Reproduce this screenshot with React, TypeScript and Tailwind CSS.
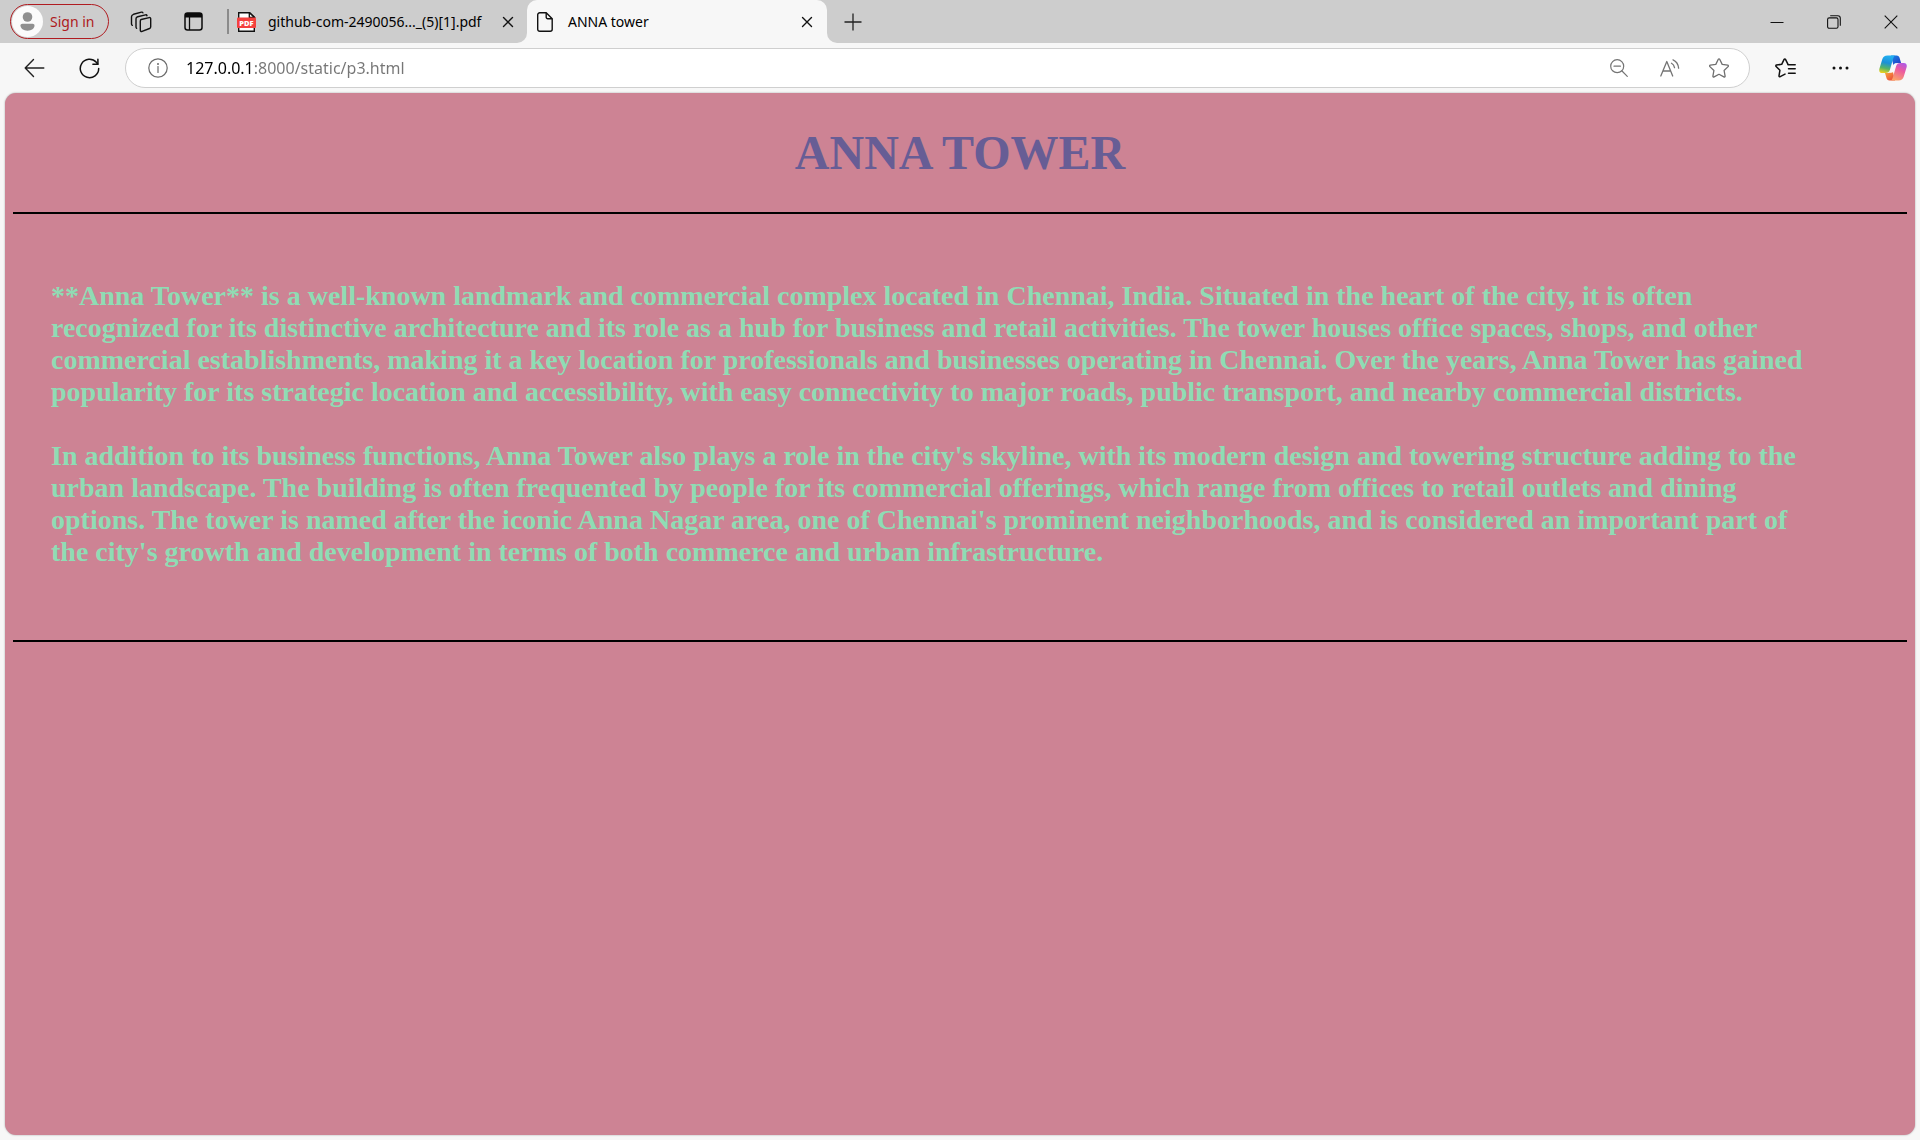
import type { ReactNode } from "react";

type IconButtonProps = { label: string; className: string; children: ReactNode };

function IconButton({ label, className, children }: IconButtonProps) {
  return (
    <button type="button" aria-label={label} className={`flex shrink-0 items-center justify-center ${className}`}>
      {children}
    </button>
  );
}

function AvatarIcon() {
  return (
    <svg width="31" height="31" viewBox="0 0 31 31" aria-hidden="true">
      <circle cx="15.5" cy="15.5" r="15.5" fill="#fbfbfb" />
      <circle cx="15.5" cy="11" r="4.8" fill="#8f8f8f" />
      <path d="M8.5 19.5c0-1 .8-1.8 1.800-1.800h10.400c1 0 1.800.8 1.800 1.800 0 3-3 5.200-7 5.200s-7-2.200-7-5.200z" fill="#8f8f8f" />
    </svg>
  );
}

function WorkspacesIcon() {
  return (
    <svg width="22" height="22" viewBox="0 0 22 22" fill="none" stroke="#111" strokeWidth="1.4" strokeLinejoin="round" strokeLinecap="round" aria-hidden="true">
      <path d="M11.200 8.500l8-1.900c.9-.2 1.500.3 1.500 1.100v8.100c0 .8-.5 1.400-1.200 1.700l-7.400 2.900c-1 .4-1.800-.1-1.800-1.100v-9.100c0-.9.300-1.500.9-1.700z" />
      <path d="M17 4.700c-.2-.7-.7-1-1.500-.8L7.700 5.700C6.600 6 6 6.600 6 7.700v8.300c0 .6.200 1 .6 1.300" />
      <path d="M12.900 1.900c-.2-.6-.7-.9-1.400-.7L3.500 3.300C2.200 3.700 1.500 4.500 1.500 5.700v7.300c0 .6.300 1 .8 1.300" />
    </svg>
  );
}

function TabActionsIcon() {
  return (
    <svg width="19" height="19" viewBox="0 0 19 19" fill="none" aria-hidden="true">
      <rect x="1" y="1" width="17" height="17" rx="2.500" stroke="#0b0b0b" strokeWidth="1.500" />
      <path d="M1 5.500V3.500A2.500 2.500 0 0 1 3.500 1h12A2.500 2.500 0 0 1 18 3.500v2z" fill="#0b0b0b" />
      <path d="M5.500 5v13" stroke="#0b0b0b" strokeWidth="1.300" />
    </svg>
  );
}

function PdfIcon() {
  return (
    <svg width="19" height="20" viewBox="0 0 19 20" aria-hidden="true">
      <path d="M1.700.7h11l4.600 4.400v14.200H1.700z" fill="#fff" stroke="#111" strokeWidth="1.400" />
      <path d="M12.300.7v4.700h5z" fill="#fff" stroke="#111" strokeWidth="1.300" />
      <rect x="0" y="5.500" width="19" height="10.500" rx="1" fill="#f4413f" />
      <text x="9.500" y="13.500" textAnchor="middle" fontFamily="Open Sans, sans-serif" fontWeight="800" fontSize="7.500" fill="#fff">PDF</text>
    </svg>
  );
}

function DocumentIcon() {
  return (
    <svg width="16" height="20" viewBox="0 0 16 20" fill="none" stroke="#111" strokeWidth="1.400" strokeLinejoin="round" aria-hidden="true">
      <path d="M2.700.8h6.500l6 6V17.300a2 2 0 0 1-2 2H2.700a2 2 0 0 1-2-2V2.800a2 2 0 0 1 2-2z" />
      <path d="M9.200.8v4.500a1.500 1.500 0 0 0 1.500 1.500h4.500" />
    </svg>
  );
}

function CrossIcon() {
  return (
    <svg width="12" height="12" viewBox="0 0 12 12" stroke="#111" strokeWidth="1.400" strokeLinecap="round" aria-hidden="true">
      <path d="M1.500 1.500l9 9M10.500 1.500l-9 9" />
    </svg>
  );
}

function PlusIcon() {
  return (
    <svg width="18" height="18" viewBox="0 0 18 18" stroke="#222" strokeWidth="1.300" aria-hidden="true">
      <path d="M9 .5v17M.5 9h17" />
    </svg>
  );
}

function MinimizeIcon() {
  return (
    <svg width="14" height="14" viewBox="0 0 14 14" stroke="#111" aria-hidden="true">
      <path d="M.5 7.500h13" />
    </svg>
  );
}

function RestoreIcon() {
  return (
    <svg width="14" height="14" viewBox="0 0 14 14" fill="none" stroke="#111" strokeWidth="1.100" aria-hidden="true">
      <rect x=".6" y="2.900" width="10.400" height="10.400" rx="1.600" />
      <path d="M3.200.8h7.600a2.500 2.500 0 0 1 2.500 2.500v7.400" />
    </svg>
  );
}

function CloseWindowIcon() {
  return (
    <svg width="14" height="14" viewBox="0 0 14 14" stroke="#111" strokeWidth="1.100" aria-hidden="true">
      <path d="M.7.7l12.600 12.600M13.300.7L.7 13.300" />
    </svg>
  );
}

function BackIcon() {
  return (
    <svg width="21" height="20" viewBox="0 0 21 20" fill="none" stroke="#222" strokeWidth="1.400" strokeLinecap="round" strokeLinejoin="round" aria-hidden="true">
      <path d="M9.500 1.500L1.200 10l8.300 8.500M1.200 10h18.600" />
    </svg>
  );
}

function ReloadIcon() {
  return (
    <svg width="21" height="21" viewBox="0 0 21 21" fill="none" stroke="#111" strokeWidth="1.500" strokeLinecap="round" strokeLinejoin="round" aria-hidden="true">
      <path d="M19.700 10.500a9.200 9.200 0 1 1-2.400-6.200l1.500 1.900" />
      <path d="M18.900 1.200v5h-5" />
    </svg>
  );
}

function InfoIcon() {
  return (
    <svg width="20" height="20" viewBox="0 0 20 20" fill="none" stroke="#6b6b6b" strokeWidth="1.200" aria-hidden="true">
      <circle cx="10" cy="10" r="9.200" />
      <path d="M10 8.500v6" strokeLinecap="round" />
      <circle cx="10" cy="5.900" r="1" fill="#6b6b6b" stroke="none" />
    </svg>
  );
}

function ZoomOutIcon() {
  return (
    <svg width="18" height="18" viewBox="0 0 18 18" fill="none" stroke="#747474" strokeWidth="1.200" strokeLinecap="round" aria-hidden="true">
      <circle cx="7.200" cy="7.200" r="6.500" />
      <path d="M4 7.200h6.400M12 12l5.300 5.300" />
    </svg>
  );
}

function ReadAloudIcon() {
  return (
    <svg width="20" height="18" viewBox="0 0 20 18" fill="none" stroke="#747474" strokeWidth="1.300" strokeLinecap="round" strokeLinejoin="round" aria-hidden="true">
      <path d="M.8 17L6.800 2.500 12.700 17M2.900 12h7.700" />
      <path d="M11.500 4.200c1.700.9 2.700 2.400 3 4.500M13 .8c3.300 1.400 5.200 4.200 5.600 8.300" />
    </svg>
  );
}

function StarIcon() {
  return (
    <svg width="20" height="20" viewBox="0 0 20 20" fill="none" stroke="#6f6f6f" strokeWidth="1.300" strokeLinejoin="round" aria-hidden="true">
      <path d="M9.300 1.300a.8.8 0 0 1 1.400 0l2.500 5.100 5.500.8c.7.100.9.900.4 1.400l-4 3.900 1 5.600c.1.700-.6 1.100-1.200.8L10 16.300l-4.900 2.600c-.6.300-1.300-.1-1.200-.8l1-5.600-4-3.900c-.5-.5-.3-1.300.4-1.400l5.500-.8z" />
    </svg>
  );
}

function FavoritesIcon() {
  return (
    <svg width="21" height="20" viewBox="0 0 21 20" fill="none" stroke="#111" strokeWidth="1.500" strokeLinejoin="round" strokeLinecap="round" aria-hidden="true">
      <path d="M13 6.300l-2.500-4.900a.8.8 0 0 0-1.400 0L6.700 6.300l-5.200.8c-.7.100-.9.900-.4 1.400l3.800 3.800-.9 5.500c-.1.700.6 1.100 1.200.8l4.800-2.500" />
      <path d="M13 6.700h7.200M13.500 10.800h6.700M13.500 15.200h6.700" />
    </svg>
  );
}

function MoreIcon() {
  return (
    <svg width="17" height="4" viewBox="0 0 17 4" fill="#111" aria-hidden="true">
      <circle cx="2" cy="2" r="1.500" />
      <circle cx="8.500" cy="2" r="1.500" />
      <circle cx="15" cy="2" r="1.500" />
    </svg>
  );
}

function CopilotIcon() {
  return (
    <svg width="28" height="26" viewBox="0 0 28 26" aria-hidden="true">
      <defs>
        <linearGradient id="cool" x1="9" y1="1" x2="5" y2="18" gradientUnits="userSpaceOnUse">
          <stop offset="0" stopColor="#22aff0" />
          <stop offset=".4" stopColor="#1b90d8" />
          <stop offset=".72" stopColor="#55b566" />
          <stop offset="1" stopColor="#ecd01f" />
        </linearGradient>
        <linearGradient id="warm" x1="24" y1="8" x2="16" y2="25" gradientUnits="userSpaceOnUse">
          <stop offset="0" stopColor="#b159e4" />
          <stop offset=".4" stopColor="#ec5aa0" />
          <stop offset="1" stopColor="#fba468" />
        </linearGradient>
        <linearGradient id="blue" x1="14" y1="0" x2="20" y2="8" gradientUnits="userSpaceOnUse">
          <stop offset="0" stopColor="#1780e4" />
          <stop offset="1" stopColor="#2348c8" />
        </linearGradient>
        <linearGradient id="red" x1="8" y1="18" x2="13" y2="25" gradientUnits="userSpaceOnUse">
          <stop offset="0" stopColor="#f7983a" />
          <stop offset="1" stopColor="#ea4f3c" />
        </linearGradient>
      </defs>
      <path d="M12 .5h5.500c1.800 0 2.700 1 3.200 2.700l1.400 4.800h-3.500c-2.200 0-3.300 1-4 3z" fill="url(#blue)" />
      <path d="M16 25.500h-5.500c-1.800 0-2.600-1-3.100-2.700L6 18h3.500c2.200 0 3.300-1 4-3z" fill="url(#red)" />
      <path d="M8.500.5h7.800c-1.300.6-1.700 1.700-2.200 3.300L11 14.500C10.200 17.200 8.900 18 6.500 18H3.200C.7 18-.2 16.200.4 13.800L3.200 4.500C4 1.800 5.700.5 8.500.5z" fill="url(#cool)" />
      <path d="M19.500 25.500h-7.800c1.300-.6 1.700-1.700 2.200-3.300L17 11.500c.8-2.700 2.100-3.500 4.500-3.500h3.300c2.500 0 3.400 1.800 2.800 4.200l-2.800 9.300c-.8 2.700-2.500 4-5.300 4z" fill="url(#warm)" />
      <path d="M18.600 8c-2.400 0-4 .6-4.700 2.800l-1.700 5.300c-.3 1-.7 1.500-1.500 1.900 2-.1 3.700-.4 4.400-2.500l1.900-5.800c.3-.8.700-1.400 1.600-1.700z" fill="#f9fafb" />
    </svg>
  );
}

function TabStrip() {
  return (
    <header className="flex h-[43px] bg-[#f7f7f7] text-sm text-black">
      <div className="flex w-[527px] shrink-0 items-center rounded-br-[10px] bg-[#cdcdcd] pb-1 pl-[10px] pt-1">
        <button type="button" className="flex h-[35px] w-[99px] shrink-0 items-center gap-[7px] rounded-full border border-[#b01c21] pl-px text-[#ae1a20]">
          <AvatarIcon />
          Sign in
        </button>
        <IconButton label="Workspaces" className="ml-[21px] size-[22px]"><WorkspacesIcon /></IconButton>
        <IconButton label="Tab actions menu" className="ml-[31px] size-5"><TabActionsIcon /></IconButton>
        <div className="ml-6 h-[25px] w-[2px] shrink-0 bg-[#8b8b8b]" />
        <div className="ml-2 flex min-w-0 flex-1 items-center">
          <PdfIcon />
          <span className="ml-3 w-[220px] whitespace-nowrap">github-com-2490056..._(5)[1].pdf</span>
          <IconButton label="Close github tab" className="ml-[14px] size-3"><CrossIcon /></IconButton>
        </div>
      </div>
      <div className="w-[300px] shrink-0 bg-[#cdcdcd]">
        <div className="flex h-full items-center rounded-t-[10px] bg-[#f7f7f7] pl-[10px] pr-[14px]">
          <DocumentIcon />
          <span className="ml-[15px] flex-1 whitespace-nowrap">ANNA tower</span>
          <IconButton label="Close ANNA tower tab" className="size-3"><CrossIcon /></IconButton>
        </div>
      </div>
      <div className="flex flex-1 items-center justify-between rounded-bl-[10px] bg-[#cdcdcd] pl-[17px] pr-[22px]">
        <IconButton label="New tab" className="size-[18px]"><PlusIcon /></IconButton>
        <div className="flex gap-[43px]">
          <IconButton label="Minimize" className="size-[14px]"><MinimizeIcon /></IconButton>
          <IconButton label="Restore" className="size-[14px]"><RestoreIcon /></IconButton>
          <IconButton label="Close window" className="size-[14px]"><CloseWindowIcon /></IconButton>
        </div>
      </div>
    </header>
  );
}

function Toolbar() {
  return (
    <nav className="flex h-[50px] items-center pl-6 pr-[13px]">
      <IconButton label="Back" className="size-[21px]"><BackIcon /></IconButton>
      <IconButton label="Refresh" className="ml-[34px] size-[21px]"><ReloadIcon /></IconButton>
      <div className="ml-[25px] flex h-10 flex-1 items-center rounded-full border border-[#cfcfcf] bg-white pl-[22px] pr-5">
        <IconButton label="View site information" className="size-5"><InfoIcon /></IconButton>
        <input
          aria-label="Address and search bar"
          defaultValue="127.0.0.1:8000/static/p3.html"
          className="ml-[18px] h-6 min-w-0 flex-1 bg-linear-to-r from-black from-[68px] to-[#767676] to-[68px] bg-clip-text text-base leading-6 text-transparent outline-none"
        />
        <IconButton label="Zoom out" className="size-[18px]"><ZoomOutIcon /></IconButton>
        <IconButton label="Read aloud" className="ml-8 size-5"><ReadAloudIcon /></IconButton>
        <IconButton label="Add to favorites" className="ml-[29px] size-5"><StarIcon /></IconButton>
      </div>
      <IconButton label="Favorites" className="ml-[25px] size-[21px]"><FavoritesIcon /></IconButton>
      <IconButton label="Settings and more" className="ml-9 h-5 w-[17px]"><MoreIcon /></IconButton>
      <IconButton label="Copilot" className="ml-[30px] size-7"><CopilotIcon /></IconButton>
    </nav>
  );
}

function Article() {
  return (
    <main className="mx-[5px] mb-[5px] flex-1 rounded-[11px] bg-[#cd8394] px-2 pt-8 font-['Liberation_Serif',serif] font-bold shadow-[0_0_2px_rgba(0,0,0,0.35)]">
      <h1 className="text-center text-5xl leading-[55px] text-[#675d95]">ANNA TOWER</h1>
      <hr className="mt-8 border-t-2 border-black" />
      <div className="space-y-8 pb-[72px] pl-[38px] pr-24 pt-[66px] text-[28px] leading-8 text-[#8fdcb4]">
        <p>
          **Anna Tower** is a well-known landmark and commercial complex located in Chennai, India. Situated in the heart of the city, it is often
          recognized for its distinctive architecture and its role as a hub for business and retail activities. The tower houses office spaces, shops, and other
          commercial establishments, making it a key location for professionals and businesses operating in Chennai. Over the years, Anna Tower has gained
          popularity for its strategic location and accessibility, with easy connectivity to major roads, public transport, and nearby commercial districts.
        </p>
        <p>
          In addition to its business functions, Anna Tower also plays a role in the city's skyline, with its modern design and towering structure adding to the
          urban landscape. The building is often frequented by people for its commercial offerings, which range from offices to retail outlets and dining
          options. The tower is named after the iconic Anna Nagar area, one of Chennai's prominent neighborhoods, and is considered an important part of
          the city's growth and development in terms of both commerce and urban infrastructure.
        </p>
      </div>
      <hr className="border-t-2 border-black" />
    </main>
  );
}

export default function App() {
  return (
    <div className="flex min-h-screen flex-col bg-[#f7f7f7] font-['Noto_Sans',sans-serif]">
      <TabStrip />
      <Toolbar />
      <Article />
    </div>
  );
}
